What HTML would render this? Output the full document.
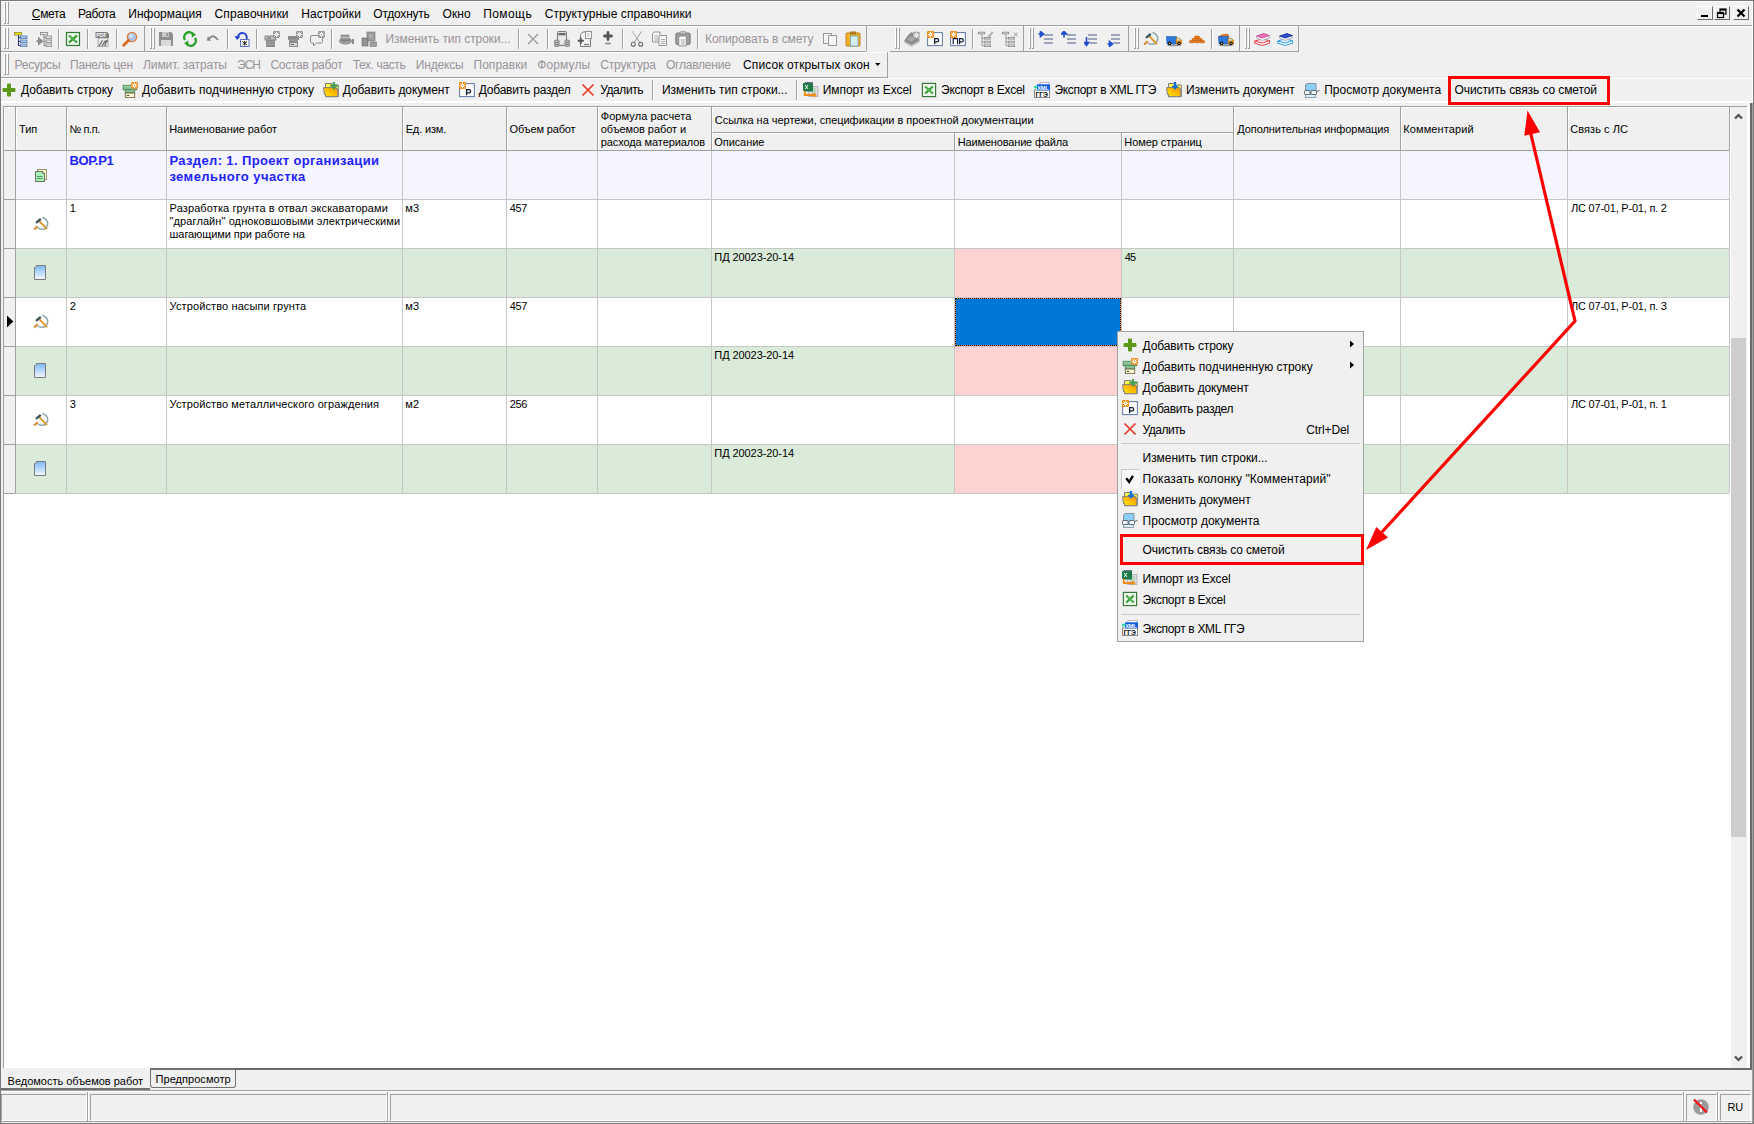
<!DOCTYPE html><html><head><meta charset="utf-8"><style>
html,body{margin:0;padding:0;width:1754px;height:1124px;overflow:hidden;background:#f0f0f0}
body>div{position:absolute}
.t{position:absolute;white-space:nowrap;font-family:"Liberation Sans",sans-serif}
</style></head><body>
<svg width="0" height="0" style="position:absolute"><defs>
<linearGradient id="gy" x1="0" y1="0" x2="0" y2="1"><stop offset="0" stop-color="#ffe840"/><stop offset="1" stop-color="#f0a800"/></linearGradient>
<linearGradient id="gg" x1="0" y1="0" x2="0" y2="1"><stop offset="0" stop-color="#a8d8b0"/><stop offset="1" stop-color="#6aa878"/></linearGradient>
<linearGradient id="gf" x1="0" y1="1" x2="1" y2="0"><stop offset="0" stop-color="#ffee00"/><stop offset="1" stop-color="#ff9000"/></linearGradient>
<linearGradient id="gb" x1="0" y1="0" x2="0" y2="1"><stop offset="0" stop-color="#7ab8f8"/><stop offset="1" stop-color="#f4f8ff"/></linearGradient>
</defs></svg>
<div style="left:0px;top:0px;width:1754px;height:1124px;background:#f0f0f0"></div>
<div style="left:0px;top:0px;width:1754px;height:1px;background:#7a7a7a"></div>
<div style="left:0px;top:0px;width:1px;height:1124px;background:#7a7a7a"></div>
<div style="left:1753px;top:0px;width:1px;height:1124px;background:#7a7a7a"></div>
<div style="left:1752px;top:103px;width:1px;height:1021px;background:#a0a0a0"></div>
<div style="left:1752px;top:1px;width:1px;height:102px;background:#fff"></div>
<div style="left:0px;top:1123px;width:1754px;height:1px;background:#7a7a7a"></div>
<div style="left:1px;top:1px;width:1750px;height:1px;background:#fff"></div>
<div style="left:1px;top:25px;width:1751px;height:1px;background:#a0a0a0"></div>
<div style="left:1px;top:26px;width:1750px;height:1px;background:#fff"></div>
<div style="left:4px;top:2px;width:1px;height:22px;background:#fff"></div>
<div style="left:5px;top:2px;width:1px;height:22px;background:#a0a0a0"></div>
<div style="left:7px;top:2px;width:1px;height:22px;background:#fff"></div>
<div style="left:8px;top:2px;width:1px;height:22px;background:#a0a0a0"></div>
<div style="left:4px;top:23px;width:2px;height:1px;background:#a0a0a0"></div>
<div style="left:7px;top:23px;width:2px;height:1px;background:#a0a0a0"></div>
<div class="t ui" style="left:31.80px;top:5.84px;font-size:12px;line-height:16px;color:#000;letter-spacing:-0.325px;">Смета</div>
<div class="t ui" style="left:78.00px;top:5.84px;font-size:12px;line-height:16px;color:#000;letter-spacing:-0.400px;">Работа</div>
<div class="t ui" style="left:128.30px;top:5.84px;font-size:12px;line-height:16px;color:#000;letter-spacing:0.000px;">Информация</div>
<div class="t ui" style="left:214.50px;top:5.84px;font-size:12px;line-height:16px;color:#000;letter-spacing:0.130px;">Справочники</div>
<div class="t ui" style="left:301.30px;top:5.84px;font-size:12px;line-height:16px;color:#000;letter-spacing:0.088px;">Настройки</div>
<div class="t ui" style="left:373.30px;top:5.84px;font-size:12px;line-height:16px;color:#000;letter-spacing:-0.225px;">Отдохнуть</div>
<div class="t ui" style="left:442.60px;top:5.84px;font-size:12px;line-height:16px;color:#000;letter-spacing:0.033px;">Окно</div>
<div class="t ui" style="left:483.20px;top:5.84px;font-size:12px;line-height:16px;color:#000;letter-spacing:0.420px;">Помощь</div>
<div class="t ui" style="left:544.70px;top:5.84px;font-size:12px;line-height:16px;color:#000;letter-spacing:0.055px;">Структурные справочники</div>
<div style="left:32px;top:19px;width:8px;height:1px;background:#000"></div>
<div style="left:1697px;top:6px;width:16px;height:14px;background:#f0f0f0;border-top:1px solid #fff;border-left:1px solid #fff;border-right:1px solid #696969;border-bottom:1px solid #696969;box-sizing:border-box"></div>
<div style="left:1714px;top:6px;width:16px;height:14px;background:#f0f0f0;border-top:1px solid #fff;border-left:1px solid #fff;border-right:1px solid #696969;border-bottom:1px solid #696969;box-sizing:border-box"></div>
<div style="left:1733px;top:6px;width:16px;height:14px;background:#f0f0f0;border-top:1px solid #fff;border-left:1px solid #fff;border-right:1px solid #696969;border-bottom:1px solid #696969;box-sizing:border-box"></div>
<svg style="position:absolute;left:1697px;top:6px" width="16" height="14" viewBox="0 0 16 14"><rect x="4" y="9" width="7" height="2" fill="#000"/></svg>
<svg style="position:absolute;left:1714px;top:6px" width="16" height="14" viewBox="0 0 16 14"><rect x="6" y="3" width="6" height="5" fill="none" stroke="#000" stroke-width="1.2"/><rect x="6" y="3" width="6" height="1.6" fill="#000"/><rect x="3.5" y="6.5" width="6" height="5" fill="#f0f0f0" stroke="#000" stroke-width="1.2"/><rect x="3.5" y="6.5" width="6" height="1.6" fill="#000"/></svg>
<svg style="position:absolute;left:1733px;top:6px" width="16" height="14" viewBox="0 0 16 14"><path d="M4.5 3.5 L11.5 10.5 M11.5 3.5 L4.5 10.5" stroke="#000" stroke-width="2.2"/></svg>
<!--TOOLBARS-->
<div style="left:1px;top:51px;width:865px;height:1px;background:#a0a0a0"></div>
<div style="left:1px;top:52px;width:886px;height:1px;background:#fff"></div>
<div style="left:890px;top:51px;width:409px;height:1px;background:#a0a0a0"></div>
<div style="left:144px;top:26px;width:1px;height:25px;background:#a0a0a0"></div>
<div style="left:866px;top:26px;width:1px;height:25px;background:#a0a0a0"></div>
<div style="left:1023px;top:26px;width:1px;height:25px;background:#a0a0a0"></div>
<div style="left:1128px;top:26px;width:1px;height:25px;background:#a0a0a0"></div>
<div style="left:1239px;top:26px;width:1px;height:25px;background:#a0a0a0"></div>
<div style="left:1298px;top:26px;width:1px;height:25px;background:#a0a0a0"></div>
<div style="left:4px;top:28px;width:1px;height:21px;background:#fff"></div>
<div style="left:5px;top:28px;width:1px;height:21px;background:#a0a0a0"></div>
<div style="left:7px;top:28px;width:1px;height:21px;background:#fff"></div>
<div style="left:8px;top:28px;width:1px;height:21px;background:#a0a0a0"></div>
<div style="left:4px;top:48px;width:2px;height:1px;background:#a0a0a0"></div>
<div style="left:7px;top:48px;width:2px;height:1px;background:#a0a0a0"></div>
<div style="left:150px;top:28px;width:1px;height:21px;background:#fff"></div>
<div style="left:151px;top:28px;width:1px;height:21px;background:#a0a0a0"></div>
<div style="left:153px;top:28px;width:1px;height:21px;background:#fff"></div>
<div style="left:154px;top:28px;width:1px;height:21px;background:#a0a0a0"></div>
<div style="left:150px;top:48px;width:2px;height:1px;background:#a0a0a0"></div>
<div style="left:153px;top:48px;width:2px;height:1px;background:#a0a0a0"></div>
<div style="left:895px;top:28px;width:1px;height:21px;background:#fff"></div>
<div style="left:896px;top:28px;width:1px;height:21px;background:#a0a0a0"></div>
<div style="left:898px;top:28px;width:1px;height:21px;background:#fff"></div>
<div style="left:899px;top:28px;width:1px;height:21px;background:#a0a0a0"></div>
<div style="left:895px;top:48px;width:2px;height:1px;background:#a0a0a0"></div>
<div style="left:898px;top:48px;width:2px;height:1px;background:#a0a0a0"></div>
<div style="left:1029px;top:28px;width:1px;height:21px;background:#fff"></div>
<div style="left:1030px;top:28px;width:1px;height:21px;background:#a0a0a0"></div>
<div style="left:1032px;top:28px;width:1px;height:21px;background:#fff"></div>
<div style="left:1033px;top:28px;width:1px;height:21px;background:#a0a0a0"></div>
<div style="left:1029px;top:48px;width:2px;height:1px;background:#a0a0a0"></div>
<div style="left:1032px;top:48px;width:2px;height:1px;background:#a0a0a0"></div>
<div style="left:1134px;top:28px;width:1px;height:21px;background:#fff"></div>
<div style="left:1135px;top:28px;width:1px;height:21px;background:#a0a0a0"></div>
<div style="left:1137px;top:28px;width:1px;height:21px;background:#fff"></div>
<div style="left:1138px;top:28px;width:1px;height:21px;background:#a0a0a0"></div>
<div style="left:1134px;top:48px;width:2px;height:1px;background:#a0a0a0"></div>
<div style="left:1137px;top:48px;width:2px;height:1px;background:#a0a0a0"></div>
<div style="left:1245px;top:28px;width:1px;height:21px;background:#fff"></div>
<div style="left:1246px;top:28px;width:1px;height:21px;background:#a0a0a0"></div>
<div style="left:1248px;top:28px;width:1px;height:21px;background:#fff"></div>
<div style="left:1249px;top:28px;width:1px;height:21px;background:#a0a0a0"></div>
<div style="left:1245px;top:48px;width:2px;height:1px;background:#a0a0a0"></div>
<div style="left:1248px;top:48px;width:2px;height:1px;background:#a0a0a0"></div>
<div style="left:58px;top:29px;width:1px;height:20px;background:#a0a0a0"></div>
<div style="left:59px;top:29px;width:1px;height:20px;background:#fff"></div>
<div style="left:87px;top:29px;width:1px;height:20px;background:#a0a0a0"></div>
<div style="left:88px;top:29px;width:1px;height:20px;background:#fff"></div>
<div style="left:116px;top:29px;width:1px;height:20px;background:#a0a0a0"></div>
<div style="left:117px;top:29px;width:1px;height:20px;background:#fff"></div>
<div style="left:227px;top:29px;width:1px;height:20px;background:#a0a0a0"></div>
<div style="left:228px;top:29px;width:1px;height:20px;background:#fff"></div>
<div style="left:256px;top:29px;width:1px;height:20px;background:#a0a0a0"></div>
<div style="left:257px;top:29px;width:1px;height:20px;background:#fff"></div>
<div style="left:331px;top:29px;width:1px;height:20px;background:#a0a0a0"></div>
<div style="left:332px;top:29px;width:1px;height:20px;background:#fff"></div>
<div style="left:518px;top:29px;width:1px;height:20px;background:#a0a0a0"></div>
<div style="left:519px;top:29px;width:1px;height:20px;background:#fff"></div>
<div style="left:547px;top:29px;width:1px;height:20px;background:#a0a0a0"></div>
<div style="left:548px;top:29px;width:1px;height:20px;background:#fff"></div>
<div style="left:622px;top:29px;width:1px;height:20px;background:#a0a0a0"></div>
<div style="left:623px;top:29px;width:1px;height:20px;background:#fff"></div>
<div style="left:697px;top:29px;width:1px;height:20px;background:#a0a0a0"></div>
<div style="left:698px;top:29px;width:1px;height:20px;background:#fff"></div>
<div style="left:972px;top:29px;width:1px;height:20px;background:#a0a0a0"></div>
<div style="left:973px;top:29px;width:1px;height:20px;background:#fff"></div>
<div style="left:1211px;top:29px;width:1px;height:20px;background:#a0a0a0"></div>
<div style="left:1212px;top:29px;width:1px;height:20px;background:#fff"></div>
<svg style="position:absolute;left:13px;top:31px" width="16" height="16" viewBox="0 0 16 16"><rect x="1.5" y="1.5" width="7" height="2.5" fill="#f2e600" stroke="#8a8a30" stroke-width="0.8"/><path d="M5.5 4 V15 M5.5 6.5 H8 M5.5 10.5 H8 M5.5 14.5 H8" stroke="#2e3c6e" stroke-width="1.1" fill="none"/><rect x="7.5" y="5" width="6.5" height="2.6" fill="#a9cdf0" stroke="#5a7ab0" stroke-width="0.8"/><rect x="7.5" y="9" width="6.5" height="2.6" fill="#a9cdf0" stroke="#5a7ab0" stroke-width="0.8"/><rect x="7.5" y="13" width="6.5" height="2.6" fill="#a9cdf0" stroke="#5a7ab0" stroke-width="0.8"/></svg>
<svg style="position:absolute;left:36px;top:31px" width="16" height="16" viewBox="0 0 16 16"><rect x="4.5" y="1.5" width="7" height="2.3" fill="#e8e8e8" stroke="#909090" stroke-width="0.9"/><path d="M8 4 V15 M8 6.5 H10 M8 10.5 H10 M8 14.5 H10" stroke="#909090" stroke-width="1.1" fill="none"/><rect x="10" y="5" width="5.5" height="2.6" fill="#e8e8e8" stroke="#909090" stroke-width="0.9"/><rect x="10" y="9" width="5.5" height="2.6" fill="#e8e8e8" stroke="#909090" stroke-width="0.9"/><rect x="10" y="13" width="5.5" height="2.6" fill="#e8e8e8" stroke="#909090" stroke-width="0.9"/><path d="M0.5 10.2 H4.5 M3 7.8 L6 10.2 L3 12.6 Z" stroke="#8c8c8c" stroke-width="2" fill="#8c8c8c"/></svg>
<svg style="position:absolute;left:65px;top:31px" width="16" height="16" viewBox="0 0 16 16"><rect x="1.5" y="1.5" width="13" height="13" fill="#eef6ec" stroke="#2f7d32" stroke-width="1.2"/><path d="M4 4.5 L12 11.5 M12 4.5 L4 11.5" stroke="#2e9a2e" stroke-width="2.3"/><path d="M4.5 4.8 L11 10.5" stroke="#8ed88e" stroke-width="0.7"/></svg>
<svg style="position:absolute;left:94px;top:31px" width="16" height="16" viewBox="0 0 16 16"><path d="M1.5 1 H13 L15 3 V7 H1.5 Z" fill="#7a7a7a"/><text x="2.3" y="6.3" font-size="5.2" font-family="Liberation Sans" font-weight="bold" fill="#fff">PDF</text><rect x="4" y="7" width="10" height="8.5" fill="#e8e8e8" stroke="#9a9a9a" stroke-width="0.8"/><path d="M5 15 L8.5 9.5 M8 15 L11.5 9.5 M11 15 Q11.5 10 14 9.5" stroke="#6a6a6a" stroke-width="1.3" fill="none"/></svg>
<svg style="position:absolute;left:122px;top:31px" width="16" height="16" viewBox="0 0 16 16"><circle cx="10" cy="6" r="4.6" fill="#a8c4ee" stroke="#e07a3c" stroke-width="1.4"/><circle cx="9" cy="5" r="1.8" fill="#dce8fa"/><path d="M6.7 9.3 L1.7 14.3" stroke="#d9691f" stroke-width="2.8" stroke-linecap="round"/></svg>
<svg style="position:absolute;left:158px;top:31px" width="16" height="16" viewBox="0 0 16 16"><path d="M1 1 H13 L15 3 V15 H1 Z" fill="#8e8e8e"/><rect x="4" y="1" width="7" height="5" fill="#c8c8c8"/><rect x="8.5" y="2" width="1.5" height="3" fill="#8e8e8e"/><rect x="3" y="9" width="10" height="6" fill="#dadada"/></svg>
<svg style="position:absolute;left:182px;top:31px" width="16" height="16" viewBox="0 0 16 16"><path d="M3 9 A5 5 0 0 1 11.5 3.5" stroke="#2aa02a" stroke-width="2.4" fill="none"/><path d="M9.5 1 L14 3.8 L9.8 6.5 Z" fill="#2aa02a"/><path d="M13 7 A5 5 0 0 1 4.5 12.5" stroke="#2aa02a" stroke-width="2.4" fill="none"/><path d="M6.5 15 L2 12.2 L6.2 9.5 Z" fill="#2aa02a"/></svg>
<svg style="position:absolute;left:205px;top:31px" width="16" height="16" viewBox="0 0 16 16"><path d="M4 8 Q8 2 13 9" stroke="#8a8a8a" stroke-width="1.8" fill="none"/><path d="M1.5 9.5 L6 10 L3 5 Z" fill="#8a8a8a"/></svg>
<svg style="position:absolute;left:234px;top:31px" width="16" height="16" viewBox="0 0 16 16"><path d="M3.5 6 Q6 0.5 10.5 2.5 Q13.5 4 12.5 9" stroke="#2244cc" stroke-width="1.8" fill="none"/><path d="M0.5 5 L6.5 5.5 L3 9 Z" fill="#2244cc"/><rect x="6.5" y="8.5" width="8.5" height="7" fill="#fff" stroke="#5870b8" stroke-width="1"/><path d="M8.5 10.5 L13 14 M13 10.5 L8.5 14 M10.7 10 V14.5" stroke="#222" stroke-width="1"/></svg>
<svg style="position:absolute;left:264px;top:31px" width="16" height="16" viewBox="0 0 16 16"><rect x="1" y="5" width="11" height="4" fill="#c0c0c0" stroke="#777" stroke-width="0.8"/><rect x="2" y="9" width="9" height="7" fill="#8a8a8a"/><path d="M2 11 H11 M2 13.5 H11" stroke="#b0b0b0" stroke-width="0.8"/><path d="M3 7 H7" stroke="#555" stroke-width="0.9"/><rect x="9.1" y="0.09999999999999987" width="6.800000000000001" height="6.800000000000001" rx="1.3" fill="#909090"/><path d="M13.50 3.50 L15.30 3.50 M13.21 4.21 L14.48 5.48 M12.50 4.50 L12.50 6.30 M11.79 4.21 L10.52 5.48 M11.50 3.50 L9.70 3.50 M11.79 2.79 L10.52 1.52 M12.50 2.50 L12.50 0.70 M13.21 2.79 L14.48 1.52 " stroke="#fff" stroke-width="0.9"/><circle cx="12.5" cy="3.5" r="1.4300000000000002" fill="#fff"/><circle cx="12.5" cy="3.5" r="0.5720000000000001" fill="#909090"/></svg>
<svg style="position:absolute;left:287px;top:31px" width="16" height="16" viewBox="0 0 16 16"><rect x="1" y="5" width="11" height="4" fill="#8a8a8a"/><rect x="2" y="9" width="9" height="7" fill="#8a8a8a"/><rect x="3" y="12" width="7" height="3" fill="#d8d8d8"/><path d="M4 13.5 H7" stroke="#555" stroke-width="0.9"/><path d="M2 9 H11" stroke="#b0b0b0" stroke-width="0.8"/><rect x="9.1" y="0.09999999999999987" width="6.800000000000001" height="6.800000000000001" rx="1.3" fill="#909090"/><path d="M13.50 3.50 L15.30 3.50 M13.21 4.21 L14.48 5.48 M12.50 4.50 L12.50 6.30 M11.79 4.21 L10.52 5.48 M11.50 3.50 L9.70 3.50 M11.79 2.79 L10.52 1.52 M12.50 2.50 L12.50 0.70 M13.21 2.79 L14.48 1.52 " stroke="#fff" stroke-width="0.9"/><circle cx="12.5" cy="3.5" r="1.4300000000000002" fill="#fff"/><circle cx="12.5" cy="3.5" r="0.5720000000000001" fill="#909090"/></svg>
<svg style="position:absolute;left:309px;top:31px" width="16" height="16" viewBox="0 0 16 16"><path d="M3 4.5 H12 Q13.5 4.5 13.5 6 V10.5 Q13.5 12 12 12 H7.5 L4.5 15 V12 H3 Q1.5 12 1.5 10.5 V6 Q1.5 4.5 3 4.5 Z" fill="#f0f0f0" stroke="#8a8a8a" stroke-width="1"/><rect x="9.1" y="0.09999999999999987" width="6.800000000000001" height="6.800000000000001" rx="1.3" fill="#909090"/><path d="M13.50 3.50 L15.30 3.50 M13.21 4.21 L14.48 5.48 M12.50 4.50 L12.50 6.30 M11.79 4.21 L10.52 5.48 M11.50 3.50 L9.70 3.50 M11.79 2.79 L10.52 1.52 M12.50 2.50 L12.50 0.70 M13.21 2.79 L14.48 1.52 " stroke="#fff" stroke-width="0.9"/><circle cx="12.5" cy="3.5" r="1.4300000000000002" fill="#fff"/><circle cx="12.5" cy="3.5" r="0.5720000000000001" fill="#909090"/></svg>
<svg style="position:absolute;left:338px;top:31px" width="16" height="16" viewBox="0 0 16 16"><ellipse cx="7.5" cy="10" rx="6.5" ry="3.5" fill="#8a8a8a"/><rect x="3" y="4" width="8" height="5" fill="#9a9a9a" stroke="#777" stroke-width="0.6"/><path d="M3 6.5 H11" stroke="#ccc" stroke-width="0.8"/><path d="M1.5 10 Q7 14 13 10" stroke="#bbb" stroke-width="0.8" fill="none"/><path d="M15 8 V13" stroke="#555" stroke-width="1.3"/></svg>
<svg style="position:absolute;left:361px;top:31px" width="16" height="16" viewBox="0 0 16 16"><rect x="6" y="1" width="8" height="9" fill="#9a9a9a" stroke="#777" stroke-width="0.6"/><path d="M8 3 L12 7 M12 3 L8 7" stroke="#ccc" stroke-width="0.7"/><rect x="1" y="7" width="6" height="8" fill="#8a8a8a" stroke="#666" stroke-width="0.6"/><path d="M3 8 V15 M5 8 V15" stroke="#b0b0b0" stroke-width="0.6"/><rect x="9" y="11" width="6.5" height="4.5" fill="#a0a0a0" stroke="#777" stroke-width="0.6"/></svg>
<svg style="position:absolute;left:525px;top:31px" width="16" height="16" viewBox="0 0 16 16"><path d="M3 3 L13 13 M13 3 L3 13" stroke="#9a9a9a" stroke-width="1.4"/></svg>
<svg style="position:absolute;left:554px;top:31px" width="16" height="16" viewBox="0 0 16 16"><rect x="3.5" y="0.5" width="9" height="14" rx="1" fill="#dcdcdc" stroke="#7a7a7a" stroke-width="1"/><rect x="4.5" y="2" width="7" height="2.2" fill="#6a6a6a"/><path d="M6 5 V13 M8.2 5 V13 M10.4 5 V13 M4 7 H12 M4 9 H12 M4 11 H12" stroke="#f4f4f4" stroke-width="0.8"/><ellipse cx="2.8" cy="14.3" rx="2.6" ry="1.3" fill="#bcbcbc" stroke="#707070" stroke-width="0.8"/><ellipse cx="2.8" cy="12.3" rx="2.6" ry="1.3" fill="#bcbcbc" stroke="#707070" stroke-width="0.8"/><ellipse cx="2.8" cy="10.3" rx="2.6" ry="1.3" fill="#bcbcbc" stroke="#707070" stroke-width="0.8"/><ellipse cx="13.2" cy="14.3" rx="2.6" ry="1.3" fill="#bcbcbc" stroke="#707070" stroke-width="0.8"/><ellipse cx="13.2" cy="12.3" rx="2.6" ry="1.3" fill="#bcbcbc" stroke="#707070" stroke-width="0.8"/><ellipse cx="13.2" cy="10.3" rx="2.6" ry="1.3" fill="#bcbcbc" stroke="#707070" stroke-width="0.8"/></svg>
<svg style="position:absolute;left:577px;top:31px" width="16" height="16" viewBox="0 0 16 16"><path d="M3.5 3.5 L6 1 H13.5 V15.5 H3.5 Z" fill="#f6f6f6" stroke="#7a7a7a" stroke-width="1"/><rect x="8.5" y="0.5" width="6" height="7" fill="#fafafa" stroke="#8a8a8a" stroke-width="0.9"/><path d="M10 3 H13 M10 5 H13" stroke="#aaa" stroke-width="0.7"/><path d="M0.8 9.8 H6.8 M3.8 6.8 V12.8" stroke="#555" stroke-width="1.9"/><path d="M7 13.5 H12" stroke="#777" stroke-width="1.3"/></svg>
<svg style="position:absolute;left:600px;top:31px" width="16" height="16" viewBox="0 0 16 16"><path d="M8 1.5 V8.5 M4.5 5 H11.5" stroke="#555" stroke-width="2.8" stroke-linecap="round"/><rect x="5" y="11.5" width="6" height="2" rx="1" fill="#999"/></svg>
<svg style="position:absolute;left:629px;top:31px" width="16" height="16" viewBox="0 0 16 16"><path d="M5.5 11 L12.5 0.5 M10.5 11 L3.5 0.5" stroke="#8a8a8a" stroke-width="0.9"/><path d="M4.5 1 L9 8" stroke="#fff" stroke-width="0.5"/><circle cx="4.3" cy="13.3" r="2" fill="none" stroke="#6a6a6a" stroke-width="1.1"/><circle cx="11.7" cy="13.3" r="2" fill="none" stroke="#6a6a6a" stroke-width="1.1"/></svg>
<svg style="position:absolute;left:652px;top:31px" width="16" height="16" viewBox="0 0 16 16"><path d="M0.5 2.5 L2.0 1 H8.0 V11 H0.5 Z" fill="#f6f6f6" stroke="#8a8a8a" stroke-width="0.9"/><path d="M2.5 5 H6.5 M2.5 7 H6.5 M2.5 9 H6.5" stroke="#8a8a8a" stroke-width="0.7"/><path d="M7 6.0 L8.5 4.5 H14.5 V14.5 H7 Z" fill="#f6f6f6" stroke="#8a8a8a" stroke-width="0.9"/><path d="M9 8.5 H13 M9 10.5 H13 M9 12.5 H13" stroke="#8a8a8a" stroke-width="0.7"/></svg>
<svg style="position:absolute;left:675px;top:31px" width="16" height="16" viewBox="0 0 16 16"><rect x="0.8" y="2" width="14.4" height="11.5" rx="1.5" fill="#9c9c9c" stroke="#6a6a6a" stroke-width="0.8"/><rect x="5" y="0.6" width="6" height="2.4" rx="1" fill="#c8c8c8" stroke="#7a7a7a" stroke-width="0.6"/><path d="M3.8 6.5 L5.3 5 H11.3 V15 H3.8 Z" fill="#f6f6f6" stroke="#8a8a8a" stroke-width="0.9"/><path d="M5.8 9 H9.8 M5.8 11 H9.8 M5.8 13 H9.8" stroke="#8a8a8a" stroke-width="0.7"/></svg>
<svg style="position:absolute;left:822px;top:31px" width="16" height="16" viewBox="0 0 16 16"><rect x="1.5" y="2.5" width="8" height="10" fill="#f4f4f4" stroke="#9a9a9a" stroke-width="1"/><rect x="6.5" y="4.5" width="8" height="10" fill="#f4f4f4" stroke="#9a9a9a" stroke-width="1"/></svg>
<svg style="position:absolute;left:845px;top:31px" width="16" height="16" viewBox="0 0 16 16"><rect x="1" y="2" width="14" height="13" fill="#f2b12a" stroke="#c08218" stroke-width="1" rx="1"/><rect x="5" y="0.5" width="6" height="3" fill="#b07a20"/><rect x="5.5" y="5" width="7.5" height="10" fill="#d6ecf6" stroke="#6aa0c0" stroke-width="0.8"/></svg>
<svg style="position:absolute;left:904px;top:31px" width="16" height="16" viewBox="0 0 16 16"><path d="M0.8 9.5 V11.5 L7.5 15.3 L15.2 10.8 V8.8 Z" fill="#c4c4c4" stroke="#9a9a9a" stroke-width="0.6"/><path d="M0.8 9.5 L5.5 3 L8 1.5 L15.2 8.8 L7.5 13.3 Z" fill="#8c8c8c" stroke="#707070" stroke-width="0.6"/><path d="M3 8.5 L6.5 5 L11 8 L7.5 11 Z" fill="#a8a8a8"/><rect x="8.9" y="0.8" width="6.800000000000001" height="6.800000000000001" rx="1.3" fill="#a0a0a0"/><path d="M13.30 4.20 L15.10 4.20 M13.01 4.91 L14.28 6.18 M12.30 5.20 L12.30 7.00 M11.59 4.91 L10.32 6.18 M11.30 4.20 L9.50 4.20 M11.59 3.49 L10.32 2.22 M12.30 3.20 L12.30 1.40 M13.01 3.49 L14.28 2.22 " stroke="#fff" stroke-width="0.9"/><circle cx="12.3" cy="4.2" r="1.4300000000000002" fill="#fff"/><circle cx="12.3" cy="4.2" r="0.5720000000000001" fill="#a0a0a0"/></svg>
<svg style="position:absolute;left:927px;top:31px" width="16" height="16" viewBox="0 0 16 16"><rect x="0.6" y="1.6" width="14.8" height="13" fill="#fff" stroke="#6a80a8" stroke-width="1.1"/><path d="M7.6 13.2 V7.6 H10.2 Q11.6 7.6 11.6 9.2 Q11.6 10.8 10.2 10.8 H7.6" stroke="#111a30" stroke-width="1.3" fill="none"/><rect x="-2.220446049250313e-16" y="-2.220446049250313e-16" width="7.0" height="7.0" rx="1.3" fill="#f28a10"/><path d="M4.60 3.50 L6.40 3.50 M4.28 4.28 L5.55 5.55 M3.50 4.60 L3.50 6.40 M2.72 4.28 L1.45 5.55 M2.40 3.50 L0.60 3.50 M2.72 2.72 L1.45 1.45 M3.50 2.40 L3.50 0.60 M4.28 2.72 L5.55 1.45 " stroke="#fff" stroke-width="0.9"/><circle cx="3.5" cy="3.5" r="1.4850000000000003" fill="#fff"/><circle cx="3.5" cy="3.5" r="0.5940000000000001" fill="#f28a10"/></svg>
<svg style="position:absolute;left:950px;top:31px" width="16" height="16" viewBox="0 0 16 16"><rect x="0.6" y="1.6" width="14.8" height="13" fill="#fff" stroke="#6a80a8" stroke-width="1.1"/><path d="M3.2 13.2 V7.6 H7.6 V13.2 M9.6 13.2 V7.6 H11.8 Q13.3 7.6 13.3 9.2 Q13.3 10.8 11.8 10.8 H9.6" stroke="#111a30" stroke-width="1.15" fill="none"/><rect x="-2.220446049250313e-16" y="-2.220446049250313e-16" width="7.0" height="7.0" rx="1.3" fill="#f28a10"/><path d="M4.60 3.50 L6.40 3.50 M4.28 4.28 L5.55 5.55 M3.50 4.60 L3.50 6.40 M2.72 4.28 L1.45 5.55 M2.40 3.50 L0.60 3.50 M2.72 2.72 L1.45 1.45 M3.50 2.40 L3.50 0.60 M4.28 2.72 L5.55 1.45 " stroke="#fff" stroke-width="0.9"/><circle cx="3.5" cy="3.5" r="1.4850000000000003" fill="#fff"/><circle cx="3.5" cy="3.5" r="0.5940000000000001" fill="#f28a10"/></svg>
<svg style="position:absolute;left:978px;top:31px" width="16" height="16" viewBox="0 0 16 16"><path d="M4 3.3 V14.7 H6.5 M4 7.2 H6.5 M4 11 H6.5" stroke="#8c8c8c" stroke-width="0.9" fill="none"/><rect x="0.5" y="1.2" width="6.2" height="1.7" fill="#f2f2f2" stroke="#8c8c8c" stroke-width="0.9"/><rect x="6.5" y="6.4" width="6" height="1.7" fill="#f2f2f2" stroke="#8c8c8c" stroke-width="0.9"/><rect x="6.5" y="10.2" width="6" height="1.7" fill="#f2f2f2" stroke="#8c8c8c" stroke-width="0.9"/><rect x="6.5" y="13.9" width="6" height="1.7" fill="#f2f2f2" stroke="#8c8c8c" stroke-width="0.9"/><path d="M9 7.5 L14.8 1" stroke="#8c8c8c" stroke-width="1.8"/><path d="M9 7.5 L14.8 1" stroke="#e8e8e8" stroke-width="0.6"/></svg>
<svg style="position:absolute;left:1002px;top:31px" width="16" height="16" viewBox="0 0 16 16"><path d="M4 3.3 V14.7 H6.5 M4 7.2 H6.5 M4 11 H6.5" stroke="#8c8c8c" stroke-width="0.9" fill="none"/><rect x="0.5" y="1.2" width="6.2" height="1.7" fill="#f2f2f2" stroke="#8c8c8c" stroke-width="0.9"/><rect x="6.5" y="6.4" width="6" height="1.7" fill="#f2f2f2" stroke="#8c8c8c" stroke-width="0.9"/><rect x="6.5" y="10.2" width="6" height="1.7" fill="#f2f2f2" stroke="#8c8c8c" stroke-width="0.9"/><rect x="6.5" y="13.9" width="6" height="1.7" fill="#f2f2f2" stroke="#8c8c8c" stroke-width="0.9"/><path d="M11.8 1.5 L15.5 5.5 M15.5 1.5 L11.8 5.5" stroke="#8c8c8c" stroke-width="0.9"/></svg>
<svg style="position:absolute;left:1038px;top:31px" width="16" height="16" viewBox="0 0 16 16"><path d="M6 4 H15 M6 8 H15 M6 12 H15" stroke="#4a5a8a" stroke-width="1.2"/><path d="M0.5 3 H4 M2.5 0.5 L5.5 3 L2.5 5.5 Z" stroke="#1f4fd0" stroke-width="1.6" fill="#1f4fd0"/></svg>
<svg style="position:absolute;left:1061px;top:31px" width="16" height="16" viewBox="0 0 16 16"><path d="M6 4 H15 M6 8 H15 M6 12 H15" stroke="#4a5a8a" stroke-width="1.2"/><path d="M3 6.5 V2.5 M0.5 3 L3 0.3 L5.5 3 Z" stroke="#1f4fd0" stroke-width="1.6" fill="#1f4fd0"/></svg>
<svg style="position:absolute;left:1084px;top:31px" width="16" height="16" viewBox="0 0 16 16"><path d="M4 4 H13 M4 8 H13 M6 12 H13" stroke="#4a5a8a" stroke-width="1.2"/><path d="M2.5 6 V12 M0.3 11.5 L2.5 14.5 L4.7 11.5 Z" stroke="#1f4fd0" stroke-width="1.6" fill="#1f4fd0"/></svg>
<svg style="position:absolute;left:1107px;top:31px" width="16" height="16" viewBox="0 0 16 16"><path d="M4 4 H13 M4 8 H13 M6 12 H13" stroke="#4a5a8a" stroke-width="1.2"/><path d="M0.5 13 H3 M2.5 10.5 L5.5 13 L2.5 15.5 Z" stroke="#1f4fd0" stroke-width="1.6" fill="#1f4fd0"/></svg>
<svg style="position:absolute;left:1143px;top:31px" width="16" height="16" viewBox="0 0 16 16"><path d="M9.5 1.3 Q15.5 4 14.6 8.5 Q13.5 13.5 8.8 13.3 Q6 13 4.8 11.7" stroke="#8fa8ac" stroke-width="1.5" fill="none"/><path d="M6.2 5.2 L14 13.2" stroke="#e0902a" stroke-width="1.9"/><path d="M3 6.8 L7.8 2.8" stroke="#3a5560" stroke-width="2.3"/><path d="M1.1 13.6 L4.6 10.2" stroke="#d8862a" stroke-width="2"/></svg>
<svg style="position:absolute;left:1166px;top:31px" width="16" height="16" viewBox="0 0 16 16"><ellipse cx="8" cy="14.3" rx="7.5" ry="0.9" fill="#555" opacity="0.6"/><path d="M0.3 5.5 H10.5 V13 H1 Z" fill="#2a78e0" stroke="#1a4a9a" stroke-width="0.5"/><path d="M10 7 H13 L15.8 9.5 V13 H10 Z" fill="#f29a1a" stroke="#a05a10" stroke-width="0.5"/><rect x="11" y="7.6" width="2.6" height="2" fill="#b8e8f8"/><circle cx="3.6" cy="12.4" r="1.8" fill="#111"/><circle cx="13" cy="12.4" r="1.8" fill="#111"/><circle cx="3.6" cy="12.4" r="0.7" fill="#f8e040"/><circle cx="13" cy="12.4" r="0.7" fill="#f8e040"/></svg>
<svg style="position:absolute;left:1189px;top:31px" width="16" height="16" viewBox="0 0 16 16"><rect x="5.5" y="5" width="5" height="2.3" rx="1.1" fill="#f07a10" stroke="#b04a00" stroke-width="0.5"/><rect x="3" y="7.3" width="5" height="2.3" rx="1.1" fill="#f07a10" stroke="#b04a00" stroke-width="0.5"/><rect x="8.2" y="7.3" width="5" height="2.3" rx="1.1" fill="#f07a10" stroke="#b04a00" stroke-width="0.5"/><rect x="0.3" y="9.5" width="5" height="2.3" rx="1.1" fill="#f07a10" stroke="#b04a00" stroke-width="0.5"/><rect x="5.5" y="9.5" width="5" height="2.3" rx="1.1" fill="#f07a10" stroke="#b04a00" stroke-width="0.5"/><rect x="10.7" y="9.5" width="5" height="2.3" rx="1.1" fill="#f07a10" stroke="#b04a00" stroke-width="0.5"/></svg>
<svg style="position:absolute;left:1218px;top:31px" width="16" height="16" viewBox="0 0 16 16"><path d="M1 5.5 Q4 3 7 3.5 Q9 2.5 10.5 4 V5.5 Z" fill="#e8741a" stroke="#a04a10" stroke-width="0.5"/><ellipse cx="8" cy="14.3" rx="7.5" ry="0.9" fill="#555" opacity="0.6"/><path d="M0.3 5.5 H10.5 V13 H1 Z" fill="#2a78e0" stroke="#1a4a9a" stroke-width="0.5"/><path d="M10 7 H13 L15.8 9.5 V13 H10 Z" fill="#f29a1a" stroke="#a05a10" stroke-width="0.5"/><rect x="11" y="7.6" width="2.6" height="2" fill="#b8e8f8"/><circle cx="3.6" cy="12.4" r="1.8" fill="#111"/><circle cx="13" cy="12.4" r="1.8" fill="#111"/><circle cx="3.6" cy="12.4" r="0.7" fill="#f8e040"/><circle cx="13" cy="12.4" r="0.7" fill="#f8e040"/></svg>
<svg style="position:absolute;left:1254px;top:31px" width="16" height="16" viewBox="0 0 16 16"><path d="M0.8 10 V12.2 L8.2 14.5 L15.4 12.2 V9.6" fill="#fff" stroke="#e84050" stroke-width="1.1"/><path d="M0.8 10 L8 7.8 L15.4 9.6 L8.2 12 Z" fill="#fde8ec" stroke="#e84050" stroke-width="1"/><path d="M2.6 5 V7.2 L8.2 9.4 L15.4 7 V4.6" fill="#fff" stroke="#a8a8b8" stroke-width="0.9"/><path d="M2.6 5 L10 2.6 L15.4 4.6 L8.2 7 Z" fill="#f070b8" stroke="#c84890" stroke-width="0.9"/></svg>
<svg style="position:absolute;left:1277px;top:31px" width="16" height="16" viewBox="0 0 16 16"><path d="M0.8 10 V12.2 L8.2 14.5 L15.4 12.2 V9.6" fill="#fff" stroke="#30a0e8" stroke-width="1.1"/><path d="M0.8 10 L8 7.8 L15.4 9.6 L8.2 12 Z" fill="#e0f0fc" stroke="#30a0e8" stroke-width="1"/><path d="M2.6 5 V7.2 L8.2 9.4 L15.4 7 V4.6" fill="#fff" stroke="#a8a8b8" stroke-width="0.9"/><path d="M2.6 5 L10 2.6 L15.4 4.6 L8.2 7 Z" fill="#2a50d8" stroke="#1a3098" stroke-width="0.9"/></svg>
<div class="t ui" style="left:385.50px;top:30.84px;font-size:12px;line-height:16px;color:#98939a;letter-spacing:-0.062px;">Изменить тип строки...</div>
<div class="t ui" style="left:705.00px;top:30.84px;font-size:12px;line-height:16px;color:#98939a;letter-spacing:-0.076px;">Копировать в смету</div>
<div style="left:1px;top:77px;width:887px;height:1px;background:#a0a0a0"></div>
<div style="left:1px;top:78px;width:1750px;height:1px;background:#fff"></div>
<div style="left:887px;top:52px;width:1px;height:26px;background:#a0a0a0"></div>
<div style="left:4px;top:54px;width:1px;height:21px;background:#fff"></div>
<div style="left:5px;top:54px;width:1px;height:21px;background:#a0a0a0"></div>
<div style="left:7px;top:54px;width:1px;height:21px;background:#fff"></div>
<div style="left:8px;top:54px;width:1px;height:21px;background:#a0a0a0"></div>
<div style="left:4px;top:74px;width:2px;height:1px;background:#a0a0a0"></div>
<div style="left:7px;top:74px;width:2px;height:1px;background:#a0a0a0"></div>
<div class="t ui" style="left:14.50px;top:56.84px;font-size:12px;line-height:16px;color:#98939a;letter-spacing:-0.217px;">Ресурсы</div>
<div class="t ui" style="left:70.00px;top:56.84px;font-size:12px;line-height:16px;color:#98939a;letter-spacing:-0.200px;">Панель цен</div>
<div class="t ui" style="left:143.00px;top:56.84px;font-size:12px;line-height:16px;color:#98939a;letter-spacing:-0.077px;">Лимит. затраты</div>
<div class="t ui" style="left:237.00px;top:56.84px;font-size:12px;line-height:16px;color:#98939a;letter-spacing:-1.000px;">ЭСН</div>
<div class="t ui" style="left:270.40px;top:56.84px;font-size:12px;line-height:16px;color:#98939a;letter-spacing:-0.264px;">Состав работ</div>
<div class="t ui" style="left:352.70px;top:56.84px;font-size:12px;line-height:16px;color:#98939a;letter-spacing:-0.378px;">Тех. часть</div>
<div class="t ui" style="left:415.70px;top:56.84px;font-size:12px;line-height:16px;color:#98939a;letter-spacing:-0.150px;">Индексы</div>
<div class="t ui" style="left:473.50px;top:56.84px;font-size:12px;line-height:16px;color:#98939a;letter-spacing:0.029px;">Поправки</div>
<div class="t ui" style="left:537.20px;top:56.84px;font-size:12px;line-height:16px;color:#98939a;letter-spacing:0.133px;">Формулы</div>
<div class="t ui" style="left:600.30px;top:56.84px;font-size:12px;line-height:16px;color:#98939a;letter-spacing:-0.175px;">Структура</div>
<div class="t ui" style="left:665.90px;top:56.84px;font-size:12px;line-height:16px;color:#98939a;letter-spacing:-0.211px;">Оглавление</div>
<div class="t ui" style="left:743.00px;top:56.84px;font-size:12px;line-height:16px;color:#000;letter-spacing:0.116px;">Список открытых окон</div>
<svg style="position:absolute;left:874px;top:62px" width="8" height="5" viewBox="0 0 8 5"><path d="M1 1 H6.5 L3.75 4 Z" fill="#000"/></svg>
<svg style="position:absolute;left:1px;top:82px" width="16" height="16" viewBox="0 0 16 16"><path d="M6.5 2 H9.5 V6.5 H14 V9.5 H9.5 V14 H6.5 V9.5 H2 V6.5 H6.5 Z" fill="#5a9a18" stroke="#5a9a18" stroke-width="1" stroke-linejoin="round"/></svg>
<div class="t ui" style="left:21.00px;top:81.84px;font-size:12px;line-height:16px;color:#000;letter-spacing:-0.043px;">Добавить строку</div>
<svg style="position:absolute;left:122px;top:82px" width="16" height="16" viewBox="0 0 16 16"><rect x="1.1" y="3.3" width="13.5" height="4.5" fill="url(#gg)" stroke="#4e8a5a" stroke-width="0.9"/><rect x="3.3" y="7.8" width="9.4" height="3.3" fill="url(#gg)" stroke="#4e8a5a" stroke-width="0.9"/><rect x="3.3" y="11.1" width="9.4" height="4.5" fill="#fff6d6" stroke="#7a6a48" stroke-width="0.9"/><rect x="4.6" y="12.9" width="2.8" height="1" rx="0.5" fill="#2a5a2a"/><rect x="9.2" y="-2.220446049250313e-16" width="6.800000000000001" height="6.800000000000001" rx="1.3" fill="#f28a1a"/><path d="M13.60 3.40 L15.40 3.40 M13.31 4.11 L14.58 5.38 M12.60 4.40 L12.60 6.20 M11.89 4.11 L10.62 5.38 M11.60 3.40 L9.80 3.40 M11.89 2.69 L10.62 1.42 M12.60 2.40 L12.60 0.60 M13.31 2.69 L14.58 1.42 " stroke="#fff" stroke-width="0.9"/><circle cx="12.6" cy="3.4" r="1.4300000000000002" fill="#fff"/><circle cx="12.6" cy="3.4" r="0.5720000000000001" fill="#f28a1a"/></svg>
<div class="t ui" style="left:142.00px;top:81.84px;font-size:12px;line-height:16px;color:#000;letter-spacing:0.065px;">Добавить подчиненную строку</div>
<svg style="position:absolute;left:323px;top:82px" width="16" height="16" viewBox="0 0 16 16"><path d="M2.5 1.5 H9 V3 H15.3 V14.6 H2.5 Z" fill="#ffff40" stroke="#7c7c8c" stroke-width="1"/><path d="M0.6 5.6 H13.4 V7 H14.8 V14.7 H2.6 V12.5 H1.4 Z" fill="url(#gf)" stroke="#7c7c8c" stroke-width="1"/><path d="M10.9 0 V7.5 M7.2 3.7 H14.8" stroke="#3aa050" stroke-width="1.9"/></svg>
<div class="t ui" style="left:342.80px;top:81.84px;font-size:12px;line-height:16px;color:#000;letter-spacing:-0.081px;">Добавить документ</div>
<svg style="position:absolute;left:459px;top:82px" width="16" height="16" viewBox="0 0 16 16"><rect x="0.6" y="1.6" width="14.8" height="13" fill="#fff" stroke="#6a80a8" stroke-width="1.1"/><path d="M7.6 13.2 V7.6 H10.2 Q11.6 7.6 11.6 9.2 Q11.6 10.8 10.2 10.8 H7.6" stroke="#111a30" stroke-width="1.3" fill="none"/><rect x="-2.220446049250313e-16" y="-2.220446049250313e-16" width="7.0" height="7.0" rx="1.3" fill="#f28a10"/><path d="M4.60 3.50 L6.40 3.50 M4.28 4.28 L5.55 5.55 M3.50 4.60 L3.50 6.40 M2.72 4.28 L1.45 5.55 M2.40 3.50 L0.60 3.50 M2.72 2.72 L1.45 1.45 M3.50 2.40 L3.50 0.60 M4.28 2.72 L5.55 1.45 " stroke="#fff" stroke-width="0.9"/><circle cx="3.5" cy="3.5" r="1.4850000000000003" fill="#fff"/><circle cx="3.5" cy="3.5" r="0.5940000000000001" fill="#f28a10"/></svg>
<div class="t ui" style="left:478.80px;top:81.84px;font-size:12px;line-height:16px;color:#000;letter-spacing:-0.221px;">Добавить раздел</div>
<svg style="position:absolute;left:580px;top:82px" width="16" height="16" viewBox="0 0 16 16"><path d="M2.5 2.5 L13.5 13.5 M13.5 2.5 L2.5 13.5" stroke="#e8382a" stroke-width="1.7"/></svg>
<div class="t ui" style="left:600.20px;top:81.84px;font-size:12px;line-height:16px;color:#000;letter-spacing:-0.417px;">Удалить</div>
<div style="left:652px;top:80px;width:1px;height:20px;background:#a0a0a0"></div>
<div style="left:653px;top:80px;width:1px;height:20px;background:#fff"></div>
<div class="t ui" style="left:662.00px;top:81.84px;font-size:12px;line-height:16px;color:#000;letter-spacing:-0.038px;">Изменить тип строки...</div>
<div style="left:796px;top:80px;width:1px;height:20px;background:#a0a0a0"></div>
<div style="left:797px;top:80px;width:1px;height:20px;background:#fff"></div>
<svg style="position:absolute;left:803px;top:82px" width="16" height="16" viewBox="0 0 16 16"><rect x="5.5" y="4.5" width="9.5" height="10" fill="#dcdcdc" stroke="#b0a8b8" stroke-width="0.8"/><path d="M8 7 H13 M8 9 H13 M8 11 H13" stroke="#8ac8a0" stroke-width="0.8"/><path d="M0 1.5 L2 0.5 H10 V9.5 H2 L0 8.5 Z" fill="#1e7a46"/><path d="M2 0.5 H10" stroke="#8050a0" stroke-width="0.8"/><path d="M2.2 3 L5 7 M5 3 L2.2 7" stroke="#fff" stroke-width="0.9"/><path d="M1.8 9 V13 H11" stroke="#f28a10" stroke-width="1.8" fill="none"/><path d="M10.5 10.6 L13.8 13 L10.5 15.4 Z" fill="#f28a10"/></svg>
<div class="t ui" style="left:822.80px;top:81.84px;font-size:12px;line-height:16px;color:#000;letter-spacing:-0.086px;">Импорт из Excel</div>
<svg style="position:absolute;left:921px;top:82px" width="16" height="16" viewBox="0 0 16 16"><rect x="1.4" y="1.4" width="13.2" height="13.2" fill="#eef6ea" stroke="#3a7a3a" stroke-width="1.2"/><path d="M4.2 4.5 L11.8 11.5 M11.8 4.5 L4.2 11.5" stroke="#30a030" stroke-width="2.1"/><path d="M4.5 4.8 L11 10.8" stroke="#90d890" stroke-width="0.6"/></svg>
<div class="t ui" style="left:941.00px;top:81.84px;font-size:12px;line-height:16px;color:#000;letter-spacing:-0.250px;">Экспорт в Excel</div>
<svg style="position:absolute;left:1034px;top:82px" width="16" height="16" viewBox="0 0 16 16"><rect x="6" y="0.5" width="9" height="3" fill="#f8f8f8" stroke="#9a9a9a" stroke-width="0.6"/><rect x="0.5" y="8" width="15" height="7.5" fill="#fff" stroke="#8a8a8a" stroke-width="1"/><text x="1.6" y="14.6" font-size="7" font-weight="bold" font-family="Liberation Sans" fill="#111" letter-spacing="-0.3">ГГЭ</text><rect x="3" y="2.3" width="13" height="6" fill="#1060e0"/><text x="3.2" y="7.6" font-size="5.6" font-weight="bold" font-family="Liberation Sans" fill="#fff" letter-spacing="-0.2">XML</text><circle cx="1.5" cy="5" r="1.6" fill="#30e0a0"/></svg>
<div class="t ui" style="left:1054.50px;top:81.84px;font-size:12px;line-height:16px;color:#000;letter-spacing:-0.344px;">Экспорт в XML ГГЭ</div>
<svg style="position:absolute;left:1166px;top:82px" width="16" height="16" viewBox="0 0 16 16"><path d="M2.5 1.5 H9 V3 H15.3 V14.6 H2.5 Z" fill="#ffff40" stroke="#7c7c8c" stroke-width="1"/><path d="M0.6 5.6 H13.4 V7 H14.8 V14.7 H2.6 V12.5 H1.4 Z" fill="url(#gf)" stroke="#7c7c8c" stroke-width="1"/><path d="M9 0 V5.5" stroke="#0a6ae0" stroke-width="2.2"/><path d="M5.3 3.8 H12.7 L9 7.8 Z" fill="#0a6ae0"/></svg>
<div class="t ui" style="left:1186.00px;top:81.84px;font-size:12px;line-height:16px;color:#000;letter-spacing:-0.038px;">Изменить документ</div>
<svg style="position:absolute;left:1304px;top:82px" width="16" height="16" viewBox="0 0 16 16"><path d="M3 1.5 H12 V11 H1.5 V3 Z" fill="#8ccff8" stroke="#7a8a98" stroke-width="0.9"/><path d="M1.5 3 H3 V1.5" fill="#e0f0ff" stroke="#7a8a98" stroke-width="0.6"/><rect x="1.5" y="12.5" width="10" height="3" fill="#d8eefc" stroke="#7a8a98" stroke-width="0.8"/><rect x="0.5" y="8.5" width="5.5" height="4" rx="0.8" fill="#eef6fc" stroke="#606870" stroke-width="1"/><rect x="7" y="8.5" width="5.5" height="4" rx="0.8" fill="#eef6fc" stroke="#606870" stroke-width="1"/><path d="M6 10 H7 M12.5 9.5 L15.5 8.5" stroke="#606870" stroke-width="1"/></svg>
<div class="t ui" style="left:1324.20px;top:81.84px;font-size:12px;line-height:16px;color:#000;letter-spacing:0.018px;">Просмотр документа</div>
<div class="t ui" style="left:1454.50px;top:81.84px;font-size:12px;line-height:16px;color:#000;letter-spacing:-0.100px;">Очистить связь со сметой</div>
<div style="left:1px;top:101px;width:1750px;height:2px;background:#fff"></div>
<div style="left:3px;top:106px;width:1748px;height:962px;background:#fff"></div>
<div style="left:3px;top:106px;width:1px;height:962px;background:#a0a0a0"></div>
<div style="left:3px;top:106px;width:1744px;height:1px;background:#a0a0a0"></div>
<div style="left:1750px;top:103px;width:2px;height:967px;background:#696969"></div>
<div style="left:236px;top:1068px;width:1516px;height:2px;background:#696969"></div>
<div style="left:4px;top:107px;width:1725px;height:43px;background:#f0f0f0"></div>
<div style="left:16px;top:150px;width:1713px;height:49px;background:#f5f5ff"></div>
<div style="left:16px;top:249px;width:1713px;height:48px;background:#dbebd9"></div>
<div style="left:955px;top:249px;width:166px;height:48px;background:#ffd2d2"></div>
<div style="left:16px;top:347px;width:1713px;height:48px;background:#dbebd9"></div>
<div style="left:955px;top:347px;width:166px;height:48px;background:#ffd2d2"></div>
<div style="left:16px;top:445px;width:1713px;height:48px;background:#dbebd9"></div>
<div style="left:955px;top:445px;width:166px;height:48px;background:#ffd2d2"></div>
<div style="left:4px;top:150px;width:11px;height:343px;background:#f0f0f0"></div>
<div style="left:4px;top:199px;width:1725px;height:1px;background:#c6c6c6"></div>
<div style="left:4px;top:248px;width:1725px;height:1px;background:#c6c6c6"></div>
<div style="left:4px;top:297px;width:1725px;height:1px;background:#c6c6c6"></div>
<div style="left:4px;top:346px;width:1725px;height:1px;background:#c6c6c6"></div>
<div style="left:4px;top:395px;width:1725px;height:1px;background:#c6c6c6"></div>
<div style="left:4px;top:444px;width:1725px;height:1px;background:#c6c6c6"></div>
<div style="left:4px;top:493px;width:1725px;height:1px;background:#c6c6c6"></div>
<div style="left:4px;top:199px;width:11px;height:1px;background:#a0a0a0"></div>
<div style="left:4px;top:248px;width:11px;height:1px;background:#a0a0a0"></div>
<div style="left:4px;top:297px;width:11px;height:1px;background:#a0a0a0"></div>
<div style="left:4px;top:346px;width:11px;height:1px;background:#a0a0a0"></div>
<div style="left:4px;top:395px;width:11px;height:1px;background:#a0a0a0"></div>
<div style="left:4px;top:444px;width:11px;height:1px;background:#a0a0a0"></div>
<div style="left:4px;top:493px;width:11px;height:1px;background:#a0a0a0"></div>
<div style="left:15px;top:150px;width:1px;height:343px;background:#a0a0a0"></div>
<div style="left:66px;top:150px;width:1px;height:343px;background:#c6c6c6"></div>
<div style="left:166px;top:150px;width:1px;height:343px;background:#c6c6c6"></div>
<div style="left:402px;top:150px;width:1px;height:343px;background:#c6c6c6"></div>
<div style="left:506px;top:150px;width:1px;height:343px;background:#c6c6c6"></div>
<div style="left:597px;top:150px;width:1px;height:343px;background:#c6c6c6"></div>
<div style="left:711px;top:150px;width:1px;height:343px;background:#c6c6c6"></div>
<div style="left:954px;top:150px;width:1px;height:343px;background:#c6c6c6"></div>
<div style="left:1121px;top:150px;width:1px;height:343px;background:#c6c6c6"></div>
<div style="left:1233px;top:150px;width:1px;height:343px;background:#c6c6c6"></div>
<div style="left:1400px;top:150px;width:1px;height:343px;background:#c6c6c6"></div>
<div style="left:1567px;top:150px;width:1px;height:343px;background:#c6c6c6"></div>
<div style="left:1729px;top:150px;width:1px;height:343px;background:#c6c6c6"></div>
<div style="left:4px;top:107px;width:1725px;height:1px;background:#fff"></div>
<div style="left:712px;top:133px;width:521px;height:1px;background:#fff"></div>
<div style="left:4px;top:150px;width:1725px;height:1px;background:#a0a0a0"></div>
<div style="left:711px;top:132px;width:522px;height:1px;background:#a0a0a0"></div>
<div style="left:15px;top:106px;width:1px;height:44px;background:#a0a0a0"></div>
<div style="left:66px;top:106px;width:1px;height:44px;background:#a0a0a0"></div>
<div style="left:166px;top:106px;width:1px;height:44px;background:#a0a0a0"></div>
<div style="left:402px;top:106px;width:1px;height:44px;background:#a0a0a0"></div>
<div style="left:506px;top:106px;width:1px;height:44px;background:#a0a0a0"></div>
<div style="left:597px;top:106px;width:1px;height:44px;background:#a0a0a0"></div>
<div style="left:711px;top:106px;width:1px;height:44px;background:#a0a0a0"></div>
<div style="left:954px;top:132px;width:1px;height:18px;background:#a0a0a0"></div>
<div style="left:1121px;top:132px;width:1px;height:18px;background:#a0a0a0"></div>
<div style="left:1233px;top:106px;width:1px;height:44px;background:#a0a0a0"></div>
<div style="left:1400px;top:106px;width:1px;height:44px;background:#a0a0a0"></div>
<div style="left:1567px;top:106px;width:1px;height:44px;background:#a0a0a0"></div>
<div style="left:1729px;top:106px;width:1px;height:44px;background:#a0a0a0"></div>
<div style="left:4px;top:107px;width:1px;height:43px;background:#fff"></div>
<div style="left:16px;top:107px;width:1px;height:43px;background:#fff"></div>
<div style="left:67px;top:107px;width:1px;height:43px;background:#fff"></div>
<div style="left:167px;top:107px;width:1px;height:43px;background:#fff"></div>
<div style="left:403px;top:107px;width:1px;height:43px;background:#fff"></div>
<div style="left:507px;top:107px;width:1px;height:43px;background:#fff"></div>
<div style="left:598px;top:107px;width:1px;height:43px;background:#fff"></div>
<div style="left:712px;top:107px;width:1px;height:43px;background:#fff"></div>
<div style="left:955px;top:133px;width:1px;height:17px;background:#fff"></div>
<div style="left:1122px;top:133px;width:1px;height:17px;background:#fff"></div>
<div style="left:1234px;top:107px;width:1px;height:43px;background:#fff"></div>
<div style="left:1401px;top:107px;width:1px;height:43px;background:#fff"></div>
<div style="left:1568px;top:107px;width:1px;height:43px;background:#fff"></div>
<div style="left:955px;top:298px;width:166px;height:48px;background:#f08a20;border:1px dotted #000;box-sizing:border-box"></div>
<div style="left:956px;top:299px;width:164px;height:46px;background:#0078d7"></div>
<svg style="position:absolute;left:6px;top:314px" width="9" height="15" viewBox="0 0 9 15"><path d="M1 1.5 L7.3 7.5 L1 13.5 Z" fill="#000"/></svg>
<div class="t g" style="left:18.90px;top:121.69px;font-size:11px;line-height:15px;color:#000;letter-spacing:0.000px;">Тип</div>
<div class="t g" style="left:69.60px;top:121.69px;font-size:11px;line-height:15px;color:#000;letter-spacing:-0.440px;">№ п.п.</div>
<div class="t g" style="left:169.20px;top:121.69px;font-size:11px;line-height:15px;color:#000;letter-spacing:-0.053px;">Наименование работ</div>
<div class="t g" style="left:405.70px;top:121.69px;font-size:11px;line-height:15px;color:#000;letter-spacing:-0.157px;">Ед. изм.</div>
<div class="t g" style="left:509.50px;top:121.69px;font-size:11px;line-height:15px;color:#000;letter-spacing:-0.150px;">Объем работ</div>
<div class="t g" style="left:1237.30px;top:121.69px;font-size:11px;line-height:15px;color:#000;letter-spacing:-0.079px;">Дополнительная информация</div>
<div class="t g" style="left:1403.30px;top:121.69px;font-size:11px;line-height:15px;color:#000;letter-spacing:0.100px;">Комментарий</div>
<div class="t g" style="left:1570.30px;top:121.69px;font-size:11px;line-height:15px;color:#000;letter-spacing:0.056px;">Связь с ЛС</div>
<div class="t g" style="left:600.70px;top:108.69px;font-size:11px;line-height:15px;color:#000;letter-spacing:0.100px;">Формула расчета</div>
<div class="t g" style="left:600.70px;top:121.69px;font-size:11px;line-height:15px;color:#000;letter-spacing:-0.057px;">объемов работ и</div>
<div class="t g" style="left:600.70px;top:134.69px;font-size:11px;line-height:15px;color:#000;letter-spacing:-0.088px;">расхода материалов</div>
<div class="t g" style="left:714.80px;top:112.69px;font-size:11px;line-height:15px;color:#000;letter-spacing:-0.029px;">Ссылка на чертежи, спецификации в проектной документации</div>
<div class="t g" style="left:714.30px;top:134.69px;font-size:11px;line-height:15px;color:#000;letter-spacing:-0.086px;">Описание</div>
<div class="t g" style="left:957.80px;top:134.69px;font-size:11px;line-height:15px;color:#000;letter-spacing:-0.165px;">Наименование файла</div>
<div class="t g" style="left:1124.30px;top:134.69px;font-size:11px;line-height:15px;color:#000;letter-spacing:-0.058px;">Номер страниц</div>
<div class="t g" style="left:69.60px;top:152.00px;font-size:13px;line-height:17px;color:#2222ff;font-weight:bold;letter-spacing:-0.240px;">ВОР.Р1</div>
<div class="t g" style="left:169.40px;top:152.00px;font-size:13px;line-height:17px;color:#2222ff;font-weight:bold;letter-spacing:0.368px;">Раздел: 1. Проект организации</div>
<div class="t g" style="left:169.40px;top:168.00px;font-size:13px;line-height:17px;color:#2222ff;font-weight:bold;letter-spacing:0.441px;">земельного участка</div>
<svg style="position:absolute;left:33px;top:167px" width="16" height="16" viewBox="0 0 16 16"><rect x="4.5" y="2.5" width="9" height="10" fill="#fff8b0" stroke="#8a8a70" stroke-width="0.9"/><path d="M2.5 4.5 H9.5 L11.5 6.5 V14.5 H2.5 Z" fill="#a8f0b8" stroke="#6a6a6a" stroke-width="1"/><path d="M9.5 4.5 V6.5 H11.5" fill="#e0e0e0" stroke="#6a6a6a" stroke-width="0.8"/><path d="M4 9.5 H9.5 M4 11.5 H9.5" stroke="#4a8a5a" stroke-width="0.9"/></svg>
<div class="t g" style="left:69.70px;top:200.69px;font-size:11px;line-height:15px;color:#000;">1</div>
<div class="t g" style="left:169.60px;top:200.69px;font-size:11px;line-height:15px;color:#000;letter-spacing:0.105px;">Разработка грунта в отвал экскаваторами</div>
<div class="t g" style="left:169.60px;top:213.69px;font-size:11px;line-height:15px;color:#000;letter-spacing:0.092px;">&quot;драглайн&quot; одноковшовыми электрическими</div>
<div class="t g" style="left:169.60px;top:226.69px;font-size:11px;line-height:15px;color:#000;letter-spacing:-0.077px;">шагающими при работе на</div>
<div class="t g" style="left:405.30px;top:200.69px;font-size:11px;line-height:15px;color:#000;letter-spacing:0.200px;">м3</div>
<div class="t g" style="left:509.70px;top:200.69px;font-size:11px;line-height:15px;color:#000;letter-spacing:-0.350px;">457</div>
<div class="t g" style="left:1571.00px;top:200.69px;font-size:11px;line-height:15px;color:#000;letter-spacing:-0.211px;">ЛС 07-01, Р-01, п. 2</div>
<svg style="position:absolute;left:33px;top:216px" width="16" height="16" viewBox="0 0 16 16"><path d="M9.5 1.3 Q15.5 4 14.6 8.5 Q13.5 13.5 8.8 13.3 Q6 13 4.8 11.7" stroke="#8fa8ac" stroke-width="1.5" fill="none"/><path d="M6.2 5.2 L14 13.2" stroke="#e0902a" stroke-width="1.9"/><path d="M3 6.8 L7.8 2.8" stroke="#3a5560" stroke-width="2.3"/><path d="M1.1 13.6 L4.6 10.2" stroke="#d8862a" stroke-width="2"/></svg>
<div class="t g" style="left:69.70px;top:298.69px;font-size:11px;line-height:15px;color:#000;">2</div>
<div class="t g" style="left:169.60px;top:298.69px;font-size:11px;line-height:15px;color:#000;letter-spacing:0.113px;">Устройство насыпи грунта</div>
<div class="t g" style="left:405.30px;top:298.69px;font-size:11px;line-height:15px;color:#000;letter-spacing:0.200px;">м3</div>
<div class="t g" style="left:509.70px;top:298.69px;font-size:11px;line-height:15px;color:#000;letter-spacing:-0.350px;">457</div>
<div class="t g" style="left:1571.00px;top:298.69px;font-size:11px;line-height:15px;color:#000;letter-spacing:-0.211px;">ЛС 07-01, Р-01, п. 3</div>
<svg style="position:absolute;left:33px;top:314px" width="16" height="16" viewBox="0 0 16 16"><path d="M9.5 1.3 Q15.5 4 14.6 8.5 Q13.5 13.5 8.8 13.3 Q6 13 4.8 11.7" stroke="#8fa8ac" stroke-width="1.5" fill="none"/><path d="M6.2 5.2 L14 13.2" stroke="#e0902a" stroke-width="1.9"/><path d="M3 6.8 L7.8 2.8" stroke="#3a5560" stroke-width="2.3"/><path d="M1.1 13.6 L4.6 10.2" stroke="#d8862a" stroke-width="2"/></svg>
<div class="t g" style="left:69.70px;top:396.69px;font-size:11px;line-height:15px;color:#000;">3</div>
<div class="t g" style="left:169.60px;top:396.69px;font-size:11px;line-height:15px;color:#000;letter-spacing:0.106px;">Устройство металлического ограждения</div>
<div class="t g" style="left:405.30px;top:396.69px;font-size:11px;line-height:15px;color:#000;letter-spacing:0.200px;">м2</div>
<div class="t g" style="left:509.70px;top:396.69px;font-size:11px;line-height:15px;color:#000;letter-spacing:-0.350px;">256</div>
<div class="t g" style="left:1571.00px;top:396.69px;font-size:11px;line-height:15px;color:#000;letter-spacing:-0.211px;">ЛС 07-01, Р-01, п. 1</div>
<svg style="position:absolute;left:33px;top:412px" width="16" height="16" viewBox="0 0 16 16"><path d="M9.5 1.3 Q15.5 4 14.6 8.5 Q13.5 13.5 8.8 13.3 Q6 13 4.8 11.7" stroke="#8fa8ac" stroke-width="1.5" fill="none"/><path d="M6.2 5.2 L14 13.2" stroke="#e0902a" stroke-width="1.9"/><path d="M3 6.8 L7.8 2.8" stroke="#3a5560" stroke-width="2.3"/><path d="M1.1 13.6 L4.6 10.2" stroke="#d8862a" stroke-width="2"/></svg>
<div class="t g" style="left:714.30px;top:249.69px;font-size:11px;line-height:15px;color:#000;letter-spacing:-0.077px;">ПД 20023-20-14</div>
<svg style="position:absolute;left:33px;top:265px" width="16" height="16" viewBox="0 0 16 16"><path d="M3.5 0.5 H12.5 V14.5 H1.5 V2.5 Z" fill="url(#gb)" stroke="#7a7a7a" stroke-width="1"/><path d="M1.5 2.5 H3.5 V0.5" fill="#fff" stroke="#8a8a8a" stroke-width="0.8"/></svg>
<div class="t g" style="left:714.30px;top:347.69px;font-size:11px;line-height:15px;color:#000;letter-spacing:-0.077px;">ПД 20023-20-14</div>
<svg style="position:absolute;left:33px;top:363px" width="16" height="16" viewBox="0 0 16 16"><path d="M3.5 0.5 H12.5 V14.5 H1.5 V2.5 Z" fill="url(#gb)" stroke="#7a7a7a" stroke-width="1"/><path d="M1.5 2.5 H3.5 V0.5" fill="#fff" stroke="#8a8a8a" stroke-width="0.8"/></svg>
<div class="t g" style="left:714.30px;top:445.69px;font-size:11px;line-height:15px;color:#000;letter-spacing:-0.077px;">ПД 20023-20-14</div>
<svg style="position:absolute;left:33px;top:461px" width="16" height="16" viewBox="0 0 16 16"><path d="M3.5 0.5 H12.5 V14.5 H1.5 V2.5 Z" fill="url(#gb)" stroke="#7a7a7a" stroke-width="1"/><path d="M1.5 2.5 H3.5 V0.5" fill="#fff" stroke="#8a8a8a" stroke-width="0.8"/></svg>
<div class="t g" style="left:1124.70px;top:249.69px;font-size:11px;line-height:15px;color:#000;letter-spacing:-0.700px;">45</div>
<div style="left:1730px;top:107px;width:20px;height:961px;background:#fff"></div>
<div style="left:1731px;top:107px;width:16px;height:961px;background:#f0f0f0"></div>
<div style="left:1731px;top:338px;width:15px;height:499px;background:#cdcdcd"></div>
<svg style="position:absolute;left:1733px;top:111px" width="11" height="10" viewBox="0 0 11 10"><path d="M2 7.5 L5.5 4 L9 7.5" stroke="#505050" stroke-width="2.2" fill="none"/></svg>
<svg style="position:absolute;left:1733px;top:1053px" width="11" height="10" viewBox="0 0 11 10"><path d="M2 3.5 L5.5 7 L9 3.5" stroke="#505050" stroke-width="2.2" fill="none"/></svg>
<!--BOTTOM-->
<div style="left:1px;top:1070px;width:1750px;height:20px;background:#f0f0f0"></div>
<div style="left:1px;top:1068px;width:235px;height:2px;background:#f0f0f0"></div>
<div style="left:150px;top:1068px;width:86px;height:20px;background:#f0f0f0;border:1px solid #707070;border-top:2px solid #707070;border-radius:0 0 3px 3px;box-sizing:border-box"></div>
<div style="left:1px;top:1088px;width:149px;height:1px;background:#707070"></div>
<div style="left:1px;top:1089px;width:149px;height:1px;background:#707070"></div>
<div class="t g" style="left:7.60px;top:1073.69px;font-size:11px;line-height:15px;color:#000;letter-spacing:-0.014px;">Ведомость объемов работ</div>
<div class="t g" style="left:155.60px;top:1071.69px;font-size:11px;line-height:15px;color:#000;letter-spacing:0.036px;">Предпросмотр</div>
<div style="left:1px;top:1090px;width:1750px;height:1px;background:#a0a0a0"></div>
<div style="left:1px;top:1091px;width:1750px;height:1px;background:#fff"></div>
<div style="left:1px;top:1094px;width:86px;height:27px;border-top:1px solid #a0a0a0;border-left:1px solid #a0a0a0;border-right:1px solid #fff;border-bottom:1px solid #fff;box-sizing:border-box"></div>
<div style="left:90px;top:1094px;width:297px;height:27px;border-top:1px solid #a0a0a0;border-left:1px solid #a0a0a0;border-right:1px solid #fff;border-bottom:1px solid #fff;box-sizing:border-box"></div>
<div style="left:390px;top:1094px;width:1293px;height:27px;border-top:1px solid #a0a0a0;border-left:1px solid #a0a0a0;border-right:1px solid #fff;border-bottom:1px solid #fff;box-sizing:border-box"></div>
<div style="left:1686px;top:1094px;width:31px;height:27px;border-top:1px solid #a0a0a0;border-left:1px solid #a0a0a0;border-right:1px solid #fff;border-bottom:1px solid #fff;box-sizing:border-box"></div>
<div style="left:1720px;top:1094px;width:31px;height:27px;border-top:1px solid #a0a0a0;border-left:1px solid #a0a0a0;border-right:1px solid #fff;border-bottom:1px solid #fff;box-sizing:border-box"></div>
<div style="left:87px;top:1092px;width:1px;height:29px;background:#a0a0a0"></div>
<div style="left:88px;top:1092px;width:1px;height:29px;background:#fff"></div>
<div style="left:387px;top:1092px;width:1px;height:29px;background:#a0a0a0"></div>
<div style="left:388px;top:1092px;width:1px;height:29px;background:#fff"></div>
<div style="left:1683px;top:1092px;width:1px;height:29px;background:#a0a0a0"></div>
<div style="left:1684px;top:1092px;width:1px;height:29px;background:#fff"></div>
<div style="left:1717px;top:1092px;width:1px;height:29px;background:#a0a0a0"></div>
<div style="left:1718px;top:1092px;width:1px;height:29px;background:#fff"></div>
<div style="left:1px;top:1121px;width:1750px;height:1px;background:#a0a0a0"></div>
<svg style="position:absolute;left:1692px;top:1098px" width="18" height="18" viewBox="0 0 18 18"><circle cx="9" cy="9" r="7.8" fill="#9a9a9a"/><rect x="8" y="4" width="2" height="2" fill="#fff"/><rect x="8" y="7" width="2" height="7" fill="#fff"/><path d="M2 1.5 L15 14.5" stroke="#ff1010" stroke-width="2.2"/></svg>
<div class="t ui" style="left:1727.40px;top:1099.69px;font-size:11px;line-height:15px;color:#000;">RU</div>
<div style="left:1117px;top:331px;width:247px;height:311px;background:#f0f0f0;border:1px solid #a0a0a0;box-sizing:border-box"></div>
<svg style="position:absolute;left:1122px;top:337px" width="16" height="16" viewBox="0 0 16 16"><path d="M6.5 2 H9.5 V6.5 H14 V9.5 H9.5 V14 H6.5 V9.5 H2 V6.5 H6.5 Z" fill="#5a9a18" stroke="#5a9a18" stroke-width="1" stroke-linejoin="round"/></svg>
<div class="t ui" style="left:1142.60px;top:337.84px;font-size:12px;line-height:16px;color:#000;letter-spacing:-0.114px;">Добавить строку</div>
<svg style="position:absolute;left:1348.5px;top:340px" width="6" height="8" viewBox="0 0 6 8"><path d="M1 0.5 L5 4 L1 7.5 Z" fill="#000"/></svg>
<svg style="position:absolute;left:1122px;top:358px" width="16" height="16" viewBox="0 0 16 16"><rect x="1.1" y="3.3" width="13.5" height="4.5" fill="url(#gg)" stroke="#4e8a5a" stroke-width="0.9"/><rect x="3.3" y="7.8" width="9.4" height="3.3" fill="url(#gg)" stroke="#4e8a5a" stroke-width="0.9"/><rect x="3.3" y="11.1" width="9.4" height="4.5" fill="#fff6d6" stroke="#7a6a48" stroke-width="0.9"/><rect x="4.6" y="12.9" width="2.8" height="1" rx="0.5" fill="#2a5a2a"/><rect x="9.2" y="-2.220446049250313e-16" width="6.800000000000001" height="6.800000000000001" rx="1.3" fill="#f28a1a"/><path d="M13.60 3.40 L15.40 3.40 M13.31 4.11 L14.58 5.38 M12.60 4.40 L12.60 6.20 M11.89 4.11 L10.62 5.38 M11.60 3.40 L9.80 3.40 M11.89 2.69 L10.62 1.42 M12.60 2.40 L12.60 0.60 M13.31 2.69 L14.58 1.42 " stroke="#fff" stroke-width="0.9"/><circle cx="12.6" cy="3.4" r="1.4300000000000002" fill="#fff"/><circle cx="12.6" cy="3.4" r="0.5720000000000001" fill="#f28a1a"/></svg>
<div class="t ui" style="left:1142.60px;top:358.84px;font-size:12px;line-height:16px;color:#000;letter-spacing:-0.012px;">Добавить подчиненную строку</div>
<svg style="position:absolute;left:1348.5px;top:361px" width="6" height="8" viewBox="0 0 6 8"><path d="M1 0.5 L5 4 L1 7.5 Z" fill="#000"/></svg>
<svg style="position:absolute;left:1122px;top:379px" width="16" height="16" viewBox="0 0 16 16"><path d="M2.5 1.5 H9 V3 H15.3 V14.6 H2.5 Z" fill="#ffff40" stroke="#7c7c8c" stroke-width="1"/><path d="M0.6 5.6 H13.4 V7 H14.8 V14.7 H2.6 V12.5 H1.4 Z" fill="url(#gf)" stroke="#7c7c8c" stroke-width="1"/><path d="M10.9 0 V7.5 M7.2 3.7 H14.8" stroke="#3aa050" stroke-width="1.9"/></svg>
<div class="t ui" style="left:1142.60px;top:379.84px;font-size:12px;line-height:16px;color:#000;letter-spacing:-0.144px;">Добавить документ</div>
<svg style="position:absolute;left:1122px;top:400px" width="16" height="16" viewBox="0 0 16 16"><rect x="0.6" y="1.6" width="14.8" height="13" fill="#fff" stroke="#6a80a8" stroke-width="1.1"/><path d="M7.6 13.2 V7.6 H10.2 Q11.6 7.6 11.6 9.2 Q11.6 10.8 10.2 10.8 H7.6" stroke="#111a30" stroke-width="1.3" fill="none"/><rect x="-2.220446049250313e-16" y="-2.220446049250313e-16" width="7.0" height="7.0" rx="1.3" fill="#f28a10"/><path d="M4.60 3.50 L6.40 3.50 M4.28 4.28 L5.55 5.55 M3.50 4.60 L3.50 6.40 M2.72 4.28 L1.45 5.55 M2.40 3.50 L0.60 3.50 M2.72 2.72 L1.45 1.45 M3.50 2.40 L3.50 0.60 M4.28 2.72 L5.55 1.45 " stroke="#fff" stroke-width="0.9"/><circle cx="3.5" cy="3.5" r="1.4850000000000003" fill="#fff"/><circle cx="3.5" cy="3.5" r="0.5940000000000001" fill="#f28a10"/></svg>
<div class="t ui" style="left:1142.60px;top:400.84px;font-size:12px;line-height:16px;color:#000;letter-spacing:-0.293px;">Добавить раздел</div>
<svg style="position:absolute;left:1122px;top:421px" width="16" height="16" viewBox="0 0 16 16"><path d="M2.5 2.5 L13.5 13.5 M13.5 2.5 L2.5 13.5" stroke="#e8382a" stroke-width="1.7"/></svg>
<div class="t ui" style="left:1142.60px;top:421.84px;font-size:12px;line-height:16px;color:#000;letter-spacing:-0.467px;">Удалить</div>
<div class="t ui" style="left:1306.30px;top:421.84px;font-size:12px;line-height:16px;color:#000;letter-spacing:-0.100px;">Ctrl+Del</div>
<div class="t ui" style="left:1142.60px;top:449.84px;font-size:12px;line-height:16px;color:#000;letter-spacing:-0.062px;">Изменить тип строки...</div>
<div style="left:1121px;top:469px;width:18px;height:20px;background:#f8f8f8;border-top:1px solid #c8c8c8;border-left:1px solid #c8c8c8;box-sizing:border-box"></div>
<svg style="position:absolute;left:1123px;top:471px" width="14" height="16" viewBox="0 0 14 16"><path d="M3.2 7.3 L6.2 11 L9.9 4.8" stroke="#000" stroke-width="2.3" fill="none"/></svg>
<div class="t ui" style="left:1142.60px;top:470.84px;font-size:12px;line-height:16px;color:#000;letter-spacing:0.090px;">Показать колонку &quot;Комментарий&quot;</div>
<svg style="position:absolute;left:1122px;top:491px" width="16" height="16" viewBox="0 0 16 16"><path d="M2.5 1.5 H9 V3 H15.3 V14.6 H2.5 Z" fill="#ffff40" stroke="#7c7c8c" stroke-width="1"/><path d="M0.6 5.6 H13.4 V7 H14.8 V14.7 H2.6 V12.5 H1.4 Z" fill="url(#gf)" stroke="#7c7c8c" stroke-width="1"/><path d="M9 0 V5.5" stroke="#0a6ae0" stroke-width="2.2"/><path d="M5.3 3.8 H12.7 L9 7.8 Z" fill="#0a6ae0"/></svg>
<div class="t ui" style="left:1142.60px;top:491.84px;font-size:12px;line-height:16px;color:#000;letter-spacing:-0.088px;">Изменить документ</div>
<svg style="position:absolute;left:1122px;top:512px" width="16" height="16" viewBox="0 0 16 16"><path d="M3 1.5 H12 V11 H1.5 V3 Z" fill="#8ccff8" stroke="#7a8a98" stroke-width="0.9"/><path d="M1.5 3 H3 V1.5" fill="#e0f0ff" stroke="#7a8a98" stroke-width="0.6"/><rect x="1.5" y="12.5" width="10" height="3" fill="#d8eefc" stroke="#7a8a98" stroke-width="0.8"/><rect x="0.5" y="8.5" width="5.5" height="4" rx="0.8" fill="#eef6fc" stroke="#606870" stroke-width="1"/><rect x="7" y="8.5" width="5.5" height="4" rx="0.8" fill="#eef6fc" stroke="#606870" stroke-width="1"/><path d="M6 10 H7 M12.5 9.5 L15.5 8.5" stroke="#606870" stroke-width="1"/></svg>
<div class="t ui" style="left:1142.60px;top:512.84px;font-size:12px;line-height:16px;color:#000;letter-spacing:0.018px;">Просмотр документа</div>
<div class="t ui" style="left:1142.60px;top:541.84px;font-size:12px;line-height:16px;color:#000;letter-spacing:-0.122px;">Очистить связь со сметой</div>
<svg style="position:absolute;left:1122px;top:570px" width="16" height="16" viewBox="0 0 16 16"><rect x="5.5" y="4.5" width="9.5" height="10" fill="#dcdcdc" stroke="#b0a8b8" stroke-width="0.8"/><path d="M8 7 H13 M8 9 H13 M8 11 H13" stroke="#8ac8a0" stroke-width="0.8"/><path d="M0 1.5 L2 0.5 H10 V9.5 H2 L0 8.5 Z" fill="#1e7a46"/><path d="M2 0.5 H10" stroke="#8050a0" stroke-width="0.8"/><path d="M2.2 3 L5 7 M5 3 L2.2 7" stroke="#fff" stroke-width="0.9"/><path d="M1.8 9 V13 H11" stroke="#f28a10" stroke-width="1.8" fill="none"/><path d="M10.5 10.6 L13.8 13 L10.5 15.4 Z" fill="#f28a10"/></svg>
<div class="t ui" style="left:1142.60px;top:570.84px;font-size:12px;line-height:16px;color:#000;letter-spacing:-0.157px;">Импорт из Excel</div>
<svg style="position:absolute;left:1122px;top:591px" width="16" height="16" viewBox="0 0 16 16"><rect x="1.4" y="1.4" width="13.2" height="13.2" fill="#eef6ea" stroke="#3a7a3a" stroke-width="1.2"/><path d="M4.2 4.5 L11.8 11.5 M11.8 4.5 L4.2 11.5" stroke="#30a030" stroke-width="2.1"/><path d="M4.5 4.8 L11 10.8" stroke="#90d890" stroke-width="0.6"/></svg>
<div class="t ui" style="left:1142.60px;top:591.84px;font-size:12px;line-height:16px;color:#000;letter-spacing:-0.321px;">Экспорт в Excel</div>
<svg style="position:absolute;left:1122px;top:620px" width="16" height="16" viewBox="0 0 16 16"><rect x="6" y="0.5" width="9" height="3" fill="#f8f8f8" stroke="#9a9a9a" stroke-width="0.6"/><rect x="0.5" y="8" width="15" height="7.5" fill="#fff" stroke="#8a8a8a" stroke-width="1"/><text x="1.6" y="14.6" font-size="7" font-weight="bold" font-family="Liberation Sans" fill="#111" letter-spacing="-0.3">ГГЭ</text><rect x="3" y="2.3" width="13" height="6" fill="#1060e0"/><text x="3.2" y="7.6" font-size="5.6" font-weight="bold" font-family="Liberation Sans" fill="#fff" letter-spacing="-0.2">XML</text><circle cx="1.5" cy="5" r="1.6" fill="#30e0a0"/></svg>
<div class="t ui" style="left:1142.60px;top:620.84px;font-size:12px;line-height:16px;color:#000;letter-spacing:-0.331px;">Экспорт в XML ГГЭ</div>
<div style="left:1121px;top:443px;width:239px;height:1px;background:#c8c8c8"></div>
<div style="left:1121px;top:535px;width:239px;height:1px;background:#c8c8c8"></div>
<div style="left:1121px;top:564px;width:239px;height:1px;background:#c8c8c8"></div>
<div style="left:1121px;top:614px;width:239px;height:1px;background:#c8c8c8"></div>
<div style="left:1448px;top:76px;width:162px;height:29px;border:3px solid #ff0000;box-sizing:border-box"></div>
<div style="left:1120px;top:534px;width:244px;height:31px;border:3px solid #ff0000;box-sizing:border-box"></div>
<svg style="position:absolute;left:0px;top:0px" width="1754" height="1124" viewBox="0 0 1754 1124"><path d="M1529 126 L1575 321 L1382 532" stroke="#ff0000" stroke-width="3.2" fill="none" stroke-linejoin="miter"/><path d="M1527.5 110.5 L1524.3 135.8 L1540 132.3 Z" fill="#ff0000"/><path d="M1366 550 L1376.3 527 L1388 537.4 Z" fill="#ff0000"/></svg>
</body></html>
